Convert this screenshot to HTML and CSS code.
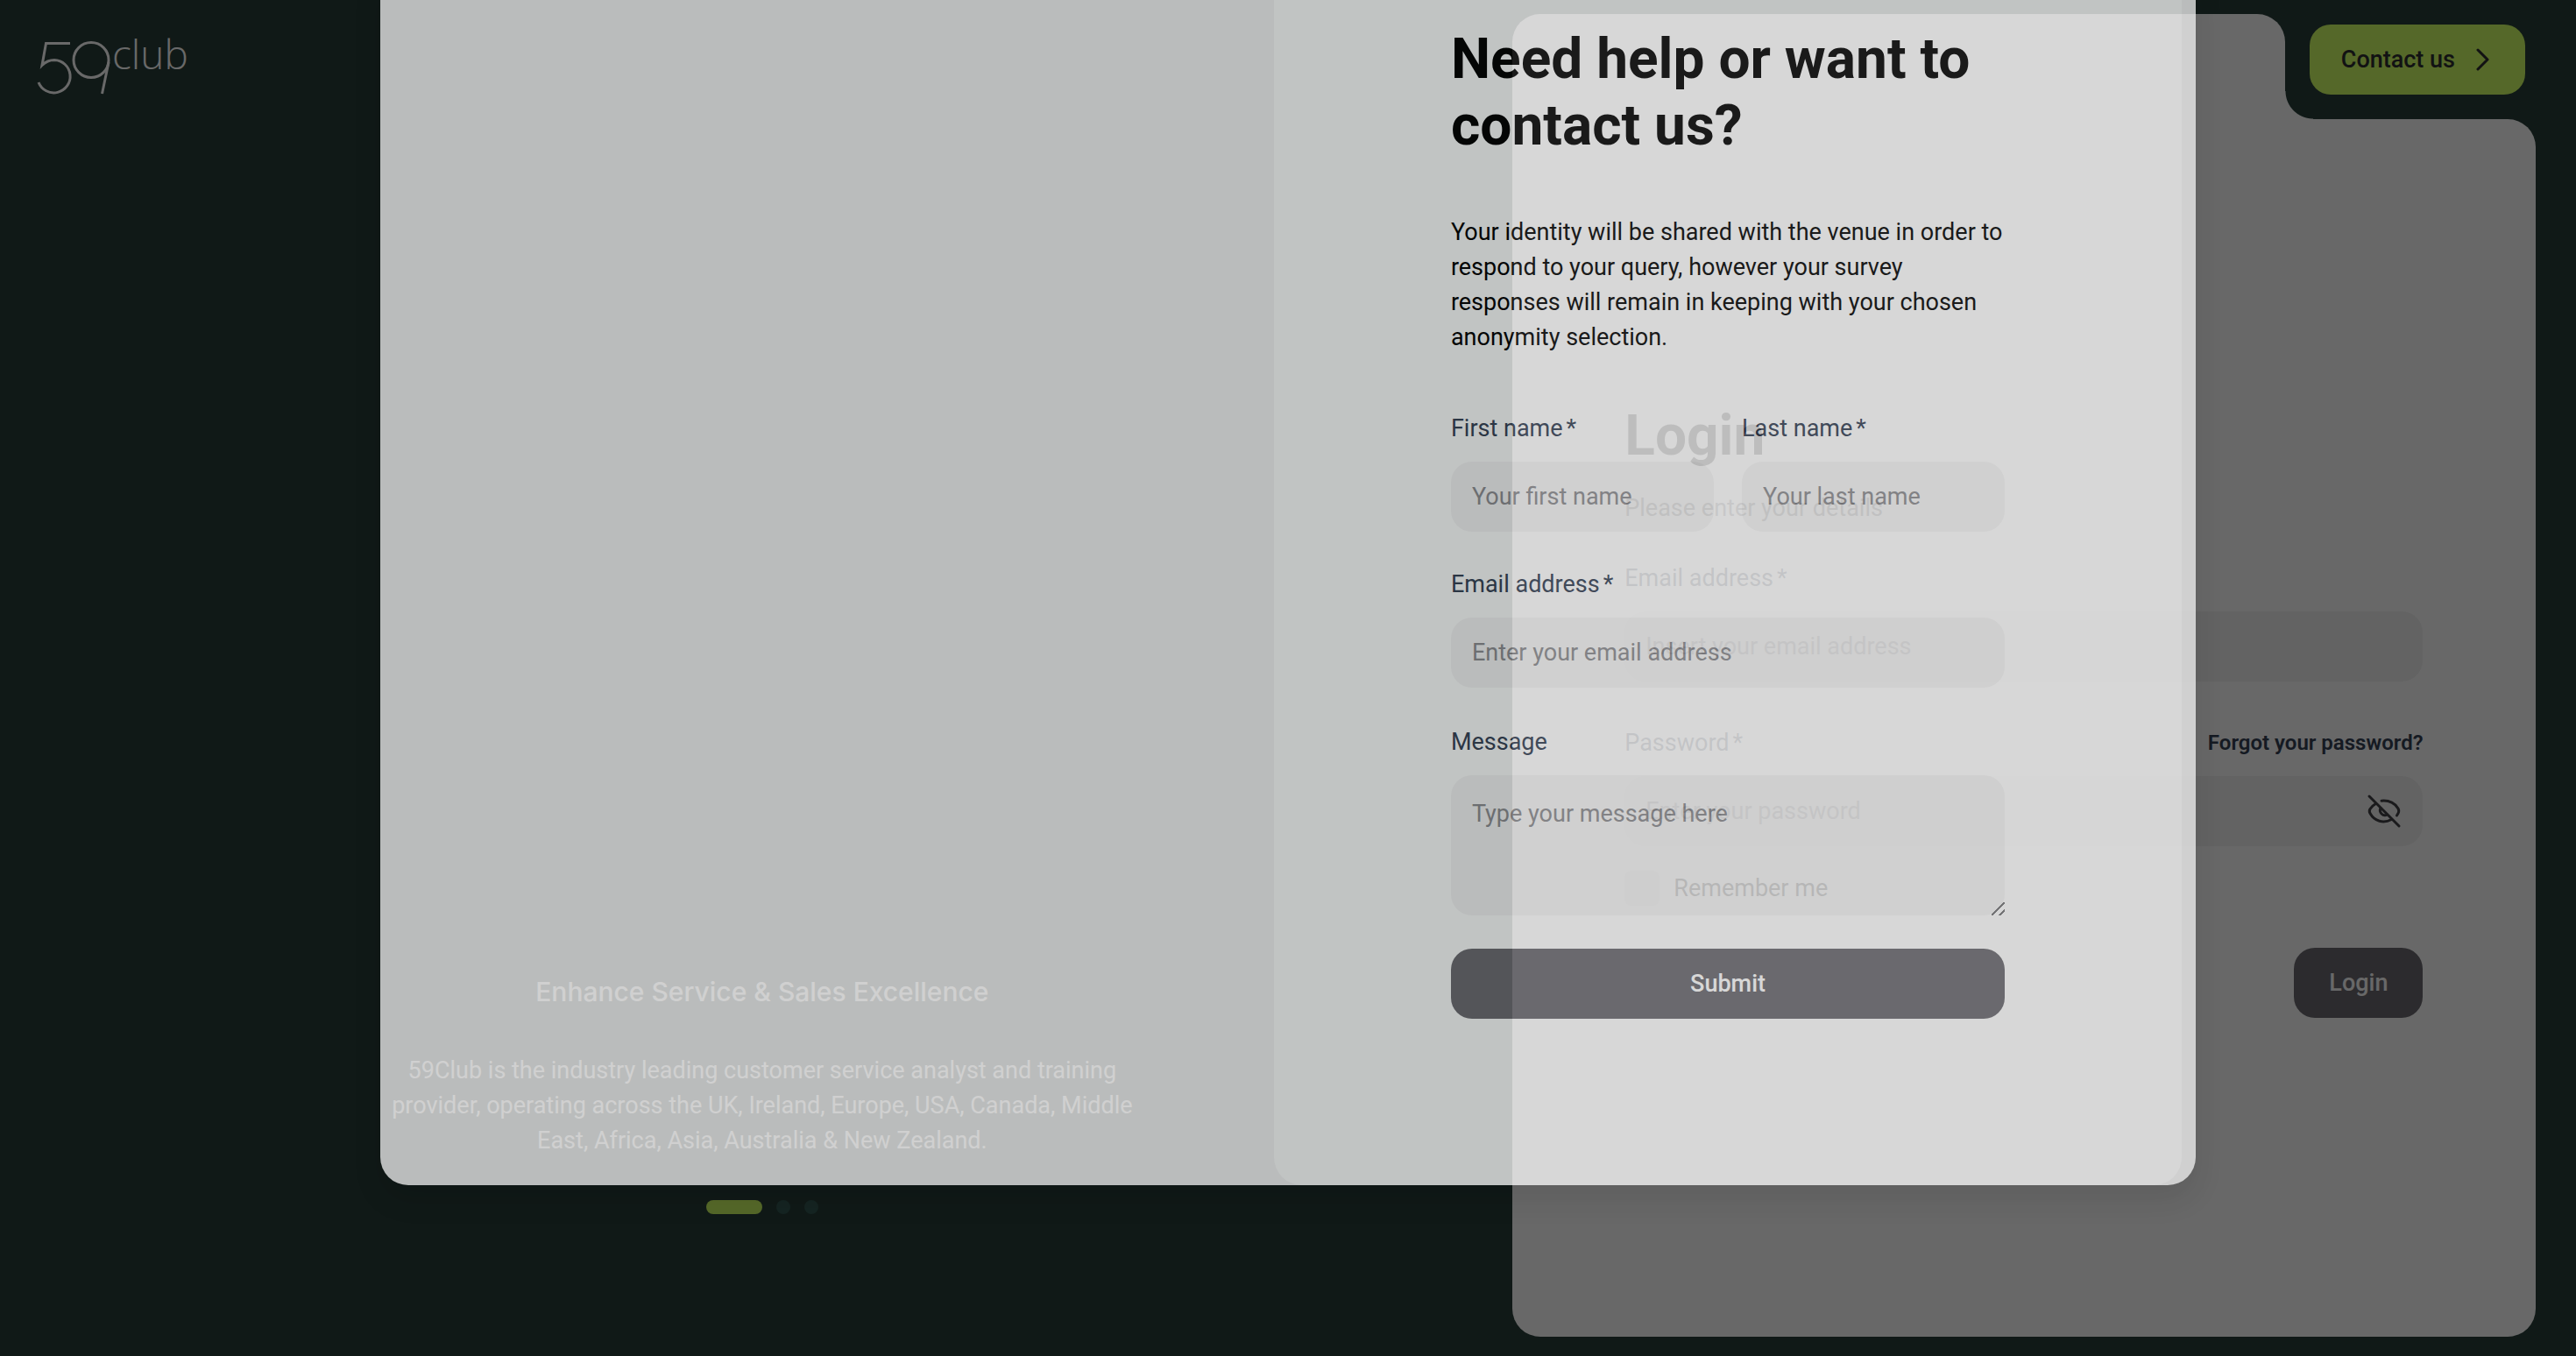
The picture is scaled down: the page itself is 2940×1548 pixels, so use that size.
FILE: index.html
```html
<!DOCTYPE html>
<html lang="en">
<head>
<meta charset="utf-8">
<meta name="viewport" content="width=device-width, initial-scale=1">
<title>59club</title>
<link rel="stylesheet" href="styles.css">
</head>
<body>
<div class="page">
  <section class="intro">
    <svg class="logo" width="180" height="64" viewBox="0 0 180 64" role="img" aria-label="59club">
      <g fill="none" stroke="currentColor" stroke-width="3">
        <path d="M38 5.500H10.500L6 30.500C11 25.500 15 24.500 20 24.500A18.700 18.700 0 1 1 2 50"/>
        <circle cx="62" cy="24.500" r="20"/>
        <path d="M82 27L74.500 63"/>
      </g>
      <text class="logo-word" x="86" y="35">club</text>
    </svg>
    <div class="slide">
      <h2 class="slide-title">Enhance Service &amp; Sales Excellence</h2>
      <p class="slide-text">59Club is the industry leading customer service analyst and training provider, operating across the UK, Ireland, Europe, USA, Canada, Middle East, Africa, Asia, Australia &amp; New Zealand.</p>
      <div class="dots"><span class="dot dot-active"></span><span class="dot"></span><span class="dot"></span></div>
    </div>
  </section>
  <section class="account">
    <div class="account-top">
      <div class="tab"></div>
      <div class="contact-slot">
        <button class="contact" type="button">Contact us
          <svg width="16" height="26" viewBox="0 0 16 26" fill="none" stroke="currentColor" stroke-width="3" stroke-linecap="round" stroke-linejoin="round"><path d="M2 2L13 13L2 24"/></svg>
        </button>
      </div>
    </div>
    <form class="login">
      <h1 class="title">Login</h1>
      <p class="lead">Please enter your details</p>
      <label class="label" for="login-email">Email address<span class="star">*</span></label>
      <div class="login-field">
        <input class="input" id="login-email" type="email" placeholder="Insert your email address">
      </div>
      <div class="label-row">
        <label class="label" for="login-password">Password<span class="star">*</span></label>
        <a class="forgot" href="#">Forgot your password?</a>
      </div>
      <div class="login-field">
        <input class="input" id="login-password" type="password" placeholder="Enter your password">
        <button class="eye" type="button" aria-label="Show password">
          <svg width="40" height="40" viewBox="0 0 40 40" fill="none" stroke="currentColor" stroke-width="3" stroke-linecap="round" stroke-linejoin="round">
            <path d="M3 3L37 37"/>
            <path d="M17 8.200C26 7.200 33 11.500 36 17Q37.500 20 36 22.500L34.500 25"/>
            <path d="M10.500 11.500Q6 14 4 17.500Q2.500 20 4 22.500C9 31.500 19 34.500 28.500 29.500"/>
            <path d="M16 16.500A5.600 5.600 0 0 0 23.500 24"/>
          </svg>
        </button>
      </div>
      <label class="remember"><input class="check" type="checkbox">Remember me</label>
      <button class="button login-button" type="submit">Login</button>
    </form>
  </section>
</div>
<div class="backdrop"></div>
<div class="overlay">
  <div class="modal" role="dialog" aria-labelledby="contact-title">
    <div class="modal-panel">
      <form class="contact-form">
        <h2 class="title" id="contact-title">Need help or want to contact us?</h2>
        <p class="note">Your identity will be shared with the venue in order to respond to your query, however your survey responses will remain in keeping with your chosen anonymity selection.</p>
        <div class="names">
          <div class="field">
            <label class="label" for="first">First name<span class="star">*</span></label>
            <input class="input" id="first" type="text" placeholder="Your first name">
          </div>
          <div class="field">
            <label class="label" for="last">Last name<span class="star">*</span></label>
            <input class="input" id="last" type="text" placeholder="Your last name">
          </div>
        </div>
        <div class="field field-email">
          <label class="label" for="email">Email address<span class="star">*</span></label>
          <input class="input" id="email" type="email" placeholder="Enter your email address">
        </div>
        <div class="field field-message">
          <label class="label" for="message">Message</label>
          <textarea class="input message" id="message" placeholder="Type your message here"></textarea>
        </div>
        <button class="button" type="submit">Submit</button>
      </form>
    </div>
  </div>
</div>
</body>
</html>
```
FILE: styles.css
```css
* { box-sizing: border-box; }

body {
  margin: 0;
  background: #273d38;
  color: #000;
  font: 400 27px/40px Roboto, "Liberation Sans", sans-serif;
}

h1, h2, p { margin: 0; }

button, input, textarea { font: inherit; }

.page {
  display: grid;
  grid-template-columns: 58.7% 41.3%;
  min-height: 100vh;
}

/* Left side */
.intro {
  display: flex;
  flex-direction: column;
  justify-content: space-between;
  padding: 44px 28px 162px 42px;
  color: #fff;
}

.logo { overflow: visible; }

.logo-word {
  fill: currentColor;
  font: 300 46px "Open Sans", "Liberation Sans", sans-serif;
}

.slide {
  display: flex;
  flex-direction: column;
  align-items: center;
  align-self: center;
  width: 880px;
  text-align: center;
}

.slide-title {
  margin-bottom: 50px;
  font: 500 30px/40px Inter, "Liberation Sans", sans-serif;
}

.slide-text { margin-bottom: 48px; }

.dots { display: flex; gap: 16px; }

.dot {
  width: 16px;
  height: 16px;
  border-radius: 8px;
  background: #345853;
}

.dot-active { width: 64px; background: #cefc64; }

/* Login card with a notch for the contact button */
.account {
  display: flex;
  flex-direction: column;
  padding: 16px 46px 22px 0;
}

.account-top { display: flex; height: 120px; }

.tab {
  position: relative;
  flex: 1;
  border-radius: 32px 32px 0 0;
  background: #fdfdfd;
}

.tab::after {
  content: "";
  position: absolute;
  bottom: 0;
  left: 100%;
  width: 32px;
  height: 32px;
  background: radial-gradient(circle at 100% 0, transparent 31px, #fdfdfd 32px);
}

.contact-slot { padding: 12px 12px 28px 28px; }

.contact {
  display: flex;
  align-items: center;
  gap: 24px;
  height: 80px;
  padding: 0 40px 0 36px;
  border: 0;
  border-radius: 24px;
  background: #cefc64;
  color: #2c2c30;
  font-weight: 500;
}

.login {
  display: flex;
  flex: 1;
  flex-direction: column;
  padding: 324px 11% 0;
  border-radius: 0 32px 32px 32px;
  background: #fdfdfd;
}

.title { font: 700 64px/76px Roboto, "Liberation Sans", sans-serif; }

.lead { margin: 24px 0 40px; color: #626266; }

.label { color: #344054; }

.star { margin-left: 4px; }

.input {
  display: block;
  width: 100%;
  height: 80px;
  padding: 0 24px;
  border: 0;
  border-radius: 24px;
  background: #f3f3f3;
  color: #000;
}

.input::placeholder { color: #8b8b8f; opacity: 1; }

.login-field { position: relative; margin-top: 18px; }

.login-field .input { background: #f0f0f0; }

.label-row {
  display: flex;
  justify-content: space-between;
  margin-top: 50px;
}

.forgot {
  color: #344054;
  font-size: 24px;
  font-weight: 600;
  text-decoration: none;
}

.eye {
  position: absolute;
  top: 20px;
  right: 24px;
  width: 40px;
  height: 40px;
  padding: 0;
  border: 0;
  background: none;
  color: #404045;
}

.eye svg { display: block; }

.remember {
  display: flex;
  align-items: center;
  gap: 16px;
  margin: 28px 0 48px;
}

.check {
  width: 40px;
  height: 40px;
  margin: 0;
  border-radius: 8px;
  background: #e8e8e8;
  appearance: none;
}

.button {
  height: 80px;
  border: 0;
  border-radius: 24px;
  background: #6b6a70;
  color: #fdfdfd;
  font-weight: 500;
}

.login-button { align-self: flex-end; padding: 0 40px; }

.backdrop {
  position: absolute;
  inset: 0;
  background: rgba(0, 0, 0, 0.59);
}

.overlay {
  position: absolute;
  inset: 0;
  display: flex;
  align-items: flex-start;
  justify-content: center;
  overflow: hidden;
}

.modal {
  display: flex;
  justify-content: flex-end;
  width: 70.5%;
  margin-top: -40px;
  padding: 40px 16px 0 0;
  border-radius: 32px;
  background: #f3f3f3;
  box-shadow: 0 16px 32px rgba(0, 0, 0, 0.12);
  opacity: 0.75;
}

.modal-panel {
  display: flex;
  justify-content: center;
  width: 50.4%;
  padding: 30px 0 190px;
  border-radius: 0 0 32px 32px;
  background: #fdfdfd;
}

.contact-form {
  display: flex;
  flex-direction: column;
  width: 61%;
}

.note { margin: 63px 0 64px; }

.names { display: flex; gap: 32px; }

.field { flex: 1; margin-bottom: 40px; }

.field-email { margin-bottom: 42px; }

.field-message { margin-bottom: 38px; }

.field .label { display: block; margin-bottom: 18px; }

.message {
  height: 160px;
  padding-top: 24px;
  resize: vertical;
}

.message::-webkit-resizer {
  background: linear-gradient(135deg, transparent 46%, #77777a 46%, #77777a 54%, transparent 54%, transparent 76%, #77777a 76%, #77777a 84%, transparent 84%);
}
```
